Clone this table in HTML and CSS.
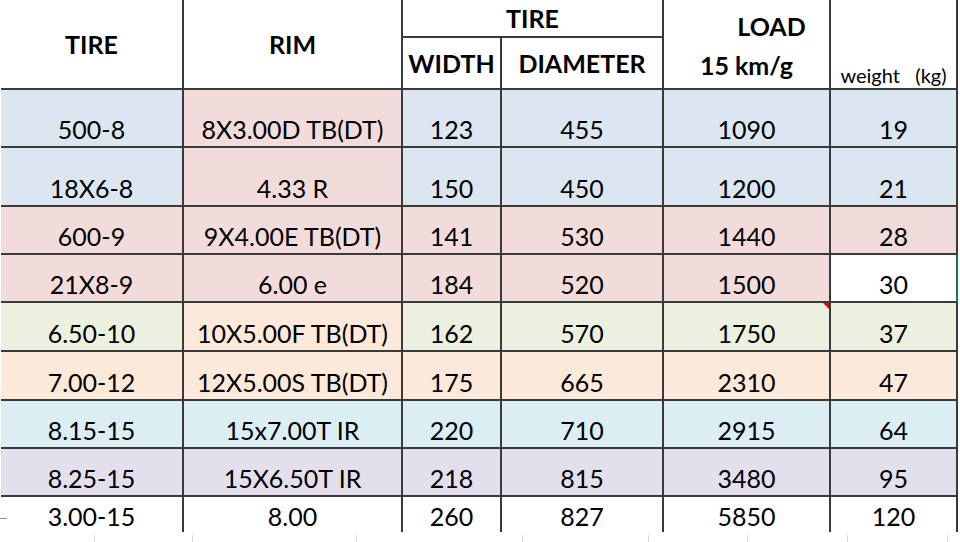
FILE: index.html
```html
<!DOCTYPE html>
<html>
<head>
<meta charset="utf-8">
<link rel="stylesheet" href="styles.css">
</head>
<body>
<div class="sheet">
<table class="spec">
<colgroup>
<col class="c-tire"><col class="c-rim"><col class="c-width"><col class="c-dia"><col class="c-load"><col class="c-weight">
</colgroup>
<thead>
<tr class="h1">
<th rowspan="2" class="hd-main">TIRE</th>
<th rowspan="2" class="hd-main">RIM</th>
<th colspan="2" class="hd-group">TIRE</th>
<th rowspan="2" class="hd-load"><span class="load-top">LOAD</span><span class="load-sub">15 km/g</span></th>
<th rowspan="2" class="hd-weight">weight&nbsp;&nbsp;&nbsp;(kg)</th>
</tr>
<tr class="h2">
<th class="hd-sub">WIDTH</th>
<th class="hd-sub">DIAMETER</th>
</tr>
</thead>
<tbody>
<tr class="r-tall1"><td class="blue">500-8</td><td class="pink">8X3.00D TB(DT)</td><td class="blue">123</td><td class="blue">455</td><td class="blue">1090</td><td class="blue">19</td></tr>
<tr class="r-tall2"><td class="blue">18X6-8</td><td class="pink">4.33 R</td><td class="blue">150</td><td class="blue">450</td><td class="blue">1200</td><td class="blue">21</td></tr>
<tr class="r-48"><td class="pink">600-9</td><td class="pink">9X4.00E TB(DT)</td><td class="pink">141</td><td class="pink">530</td><td class="pink">1440</td><td class="pink">28</td></tr>
<tr class="r-48"><td class="pink">21X8-9</td><td class="pink">6.00 e</td><td class="pink">184</td><td class="pink">520</td><td class="pink">1500</td><td class="white selected">30</td></tr>
<tr class="r-49"><td class="green">6.50-10</td><td class="peach">10X5.00F TB(DT)</td><td class="green">162</td><td class="green">570</td><td class="green commented">1750</td><td class="green">37</td></tr>
<tr class="r-49"><td class="peach">7.00-12</td><td class="peach">12X5.00S TB(DT)</td><td class="peach">175</td><td class="peach">665</td><td class="peach">2310</td><td class="peach">47</td></tr>
<tr class="r-48"><td class="cyan">8.15-15</td><td class="cyan">15x7.00T IR</td><td class="cyan">220</td><td class="cyan">710</td><td class="cyan">2915</td><td class="cyan">64</td></tr>
<tr class="r-48"><td class="lav">8.25-15</td><td class="lav">15X6.50T IR</td><td class="lav">218</td><td class="lav">815</td><td class="lav">3480</td><td class="lav">95</td></tr>
<tr class="r-last"><td class="white marked">3.00-15</td><td class="white">8.00</td><td class="white">260</td><td class="white">827</td><td class="white">5850</td><td class="white">120</td></tr>
</tbody>
</table>
<div class="grid-strip">
<span class="g g1"></span><span class="g g2"></span><span class="g g3"></span><span class="g g4"></span><span class="g g5"></span><span class="g g6"></span><span class="g g7"></span><span class="g g8"></span>
</div>
</div>
</body>
</html>
```
FILE: styles.css
```css
html, body {
  margin: 0;
  padding: 0;
  background: #ffffff;
}

.sheet {
  width: 960px;
  height: 542px;
  overflow: hidden;
  font-family: Lato, "Open Sans", sans-serif;
  color: #000;
}

.spec {
  border-collapse: collapse;
  table-layout: fixed;
  width: 957px;
  margin-left: 1px;
}

.c-tire { width: 182px; }
.c-rim { width: 219px; }
.c-width { width: 99px; }
.c-dia { width: 162px; }
.c-load { width: 167px; }
.c-weight { width: 127px; }

.spec th,
.spec td {
  border: 2px solid #3a3a3a;
  padding: 0;
  text-align: center;
}

.spec thead th {
  font-weight: 700;
  font-size: 25px;
  line-height: 1;
  background: #fff;
}

.h1 th { border-top: none; }
.h1 { height: 37px; }
.h2 { height: 52px; }

.spec th:first-child,
.spec td:first-child {
  border-left: none;
}

.hd-main {
  vertical-align: middle;
  padding-top: 6px;
}

.hd-group {
  vertical-align: middle;
  padding-bottom: 4px;
}

.hd-sub {
  vertical-align: middle;
  padding-top: 2px;
}

.hd-load {
  vertical-align: top;
}

.load-top {
  display: block;
  padding-left: 50px;
  padding-top: 14px;
}

.load-sub {
  display: block;
  padding-top: 14px;
}

.spec .hd-weight {
  font-weight: 400;
  font-size: 20px;
  vertical-align: bottom;
  padding-bottom: 3px;
  white-space: nowrap;
}

.spec td {
  font-size: 25px;
  line-height: 1;
  vertical-align: bottom;
  padding-bottom: 4px;
  position: relative;
}

.r-tall1 { height: 58px; }
.r-tall2 { height: 59px; }
.r-48 { height: 48px; }
.r-49 { height: 49px; }
.r-last { height: 36px; }

.spec .r-last td {
  border-bottom: none;
  padding-bottom: 3px;
}

.blue { background: #dce6f1; }
.pink { background: #f2dcdb; }
.green { background: #ebf1de; }
.peach { background: #fde9d9; }
.cyan { background: #daeef3; }
.lav { background: #e4dfec; }
.white { background: #ffffff; }

.selected::after {
  content: "";
  position: absolute;
  right: -2px;
  top: -1px;
  bottom: -1px;
  width: 2px;
  background: #217346;
}

.commented::after {
  content: "";
  position: absolute;
  top: 0;
  right: 0;
  border-top: 6px solid #e00000;
  border-left: 6px solid transparent;
}

.marked::before {
  content: "";
  position: absolute;
  left: -1px;
  top: 21px;
  width: 7px;
  height: 1px;
  background: #8a8a8a;
}

.grid-strip {
  display: flex;
  height: 12px;
  margin-top: 3px;
}

.g {
  display: block;
  height: 100%;
  border-right: 1px solid #dadada;
  flex: none;
}

.g1 { width: 94px; }
.g2 { width: 97px; }
.g3 { width: 163px; }
.g4 { width: 165px; }
.g5 { width: 125px; }
.g6 { width: 98px; }
.g7 { width: 99px; }
.g8 { width: 99px; }
```
